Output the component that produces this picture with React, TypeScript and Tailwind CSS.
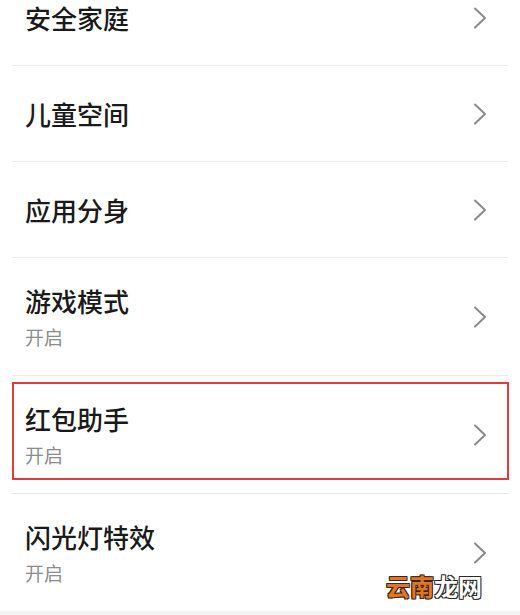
import React from "react";

type Item = { title: string; sub?: string; marked?: boolean };

const items: Item[] = [
  { title: "安全家庭" },
  { title: "儿童空间" },
  { title: "应用分身" },
  { title: "游戏模式", sub: "开启" },
  { title: "红包助手", sub: "开启", marked: true },
  { title: "闪光灯特效", sub: "开启" },
];

function Chevron() {
  return (
    <svg width="14" height="22" viewBox="0 0 14 22" fill="none" className="shrink-0">
      <path d="M2 1.5 L12 11 L2 20.5" stroke="#8a8a8a" strokeWidth="2" strokeLinecap="round" strokeLinejoin="round" />
    </svg>
  );
}

function Row({ item, last }: { item: Item; last: boolean }) {
  return (
    <>
      <div
        className={`relative flex items-center pl-[25px] pr-[33px] ${
          item.sub ? "h-[117px]" : "h-[95px]"
        }`}
      >
        <div className="flex-1 flex flex-col">
          <span className="text-[26px] leading-[34px] font-medium text-[#1a1a1a]">{item.title}</span>
          {item.sub && (
            <span className="mt-[6px] text-[19px] leading-[26px] text-[#8c8c8c]">{item.sub}</span>
          )}
        </div>
        <Chevron />
        {item.marked && (
          <div className="absolute top-[6px] bottom-[13px] left-[12px] right-[11px] border-2 border-[#e23b3b]" />
        )}
      </div>
      {!last && <div className="mx-[12px] h-px bg-[#ebebeb]" />}
    </>
  );
}

export default function App() {
  return (
    <div className="relative w-[520px] h-[615px] overflow-hidden bg-white font-['Noto_Sans_CJK_SC',sans-serif] flex flex-col">
      <div className="mt-[-30px] flex flex-col">
        {items.map((item, i) => (
          <Row key={item.title} item={item} last={i === items.length - 1} />
        ))}
      </div>
      <div className="flex-1 bg-[#f3f3f3]" />

      {/* watermark */}
      <div className="absolute left-[386px] top-[571px] text-[24px] leading-[30px] font-bold tracking-[0px] [text-shadow:1px_1px_0_#2a2a2a,-1px_-1px_0_#2a2a2a,1px_-1px_0_#2a2a2a,-1px_1px_0_#2a2a2a]">
        <span className="text-[#e8731c]">云南</span>
        <span className="text-white">龙网</span>
      </div>
    </div>
  );
}
